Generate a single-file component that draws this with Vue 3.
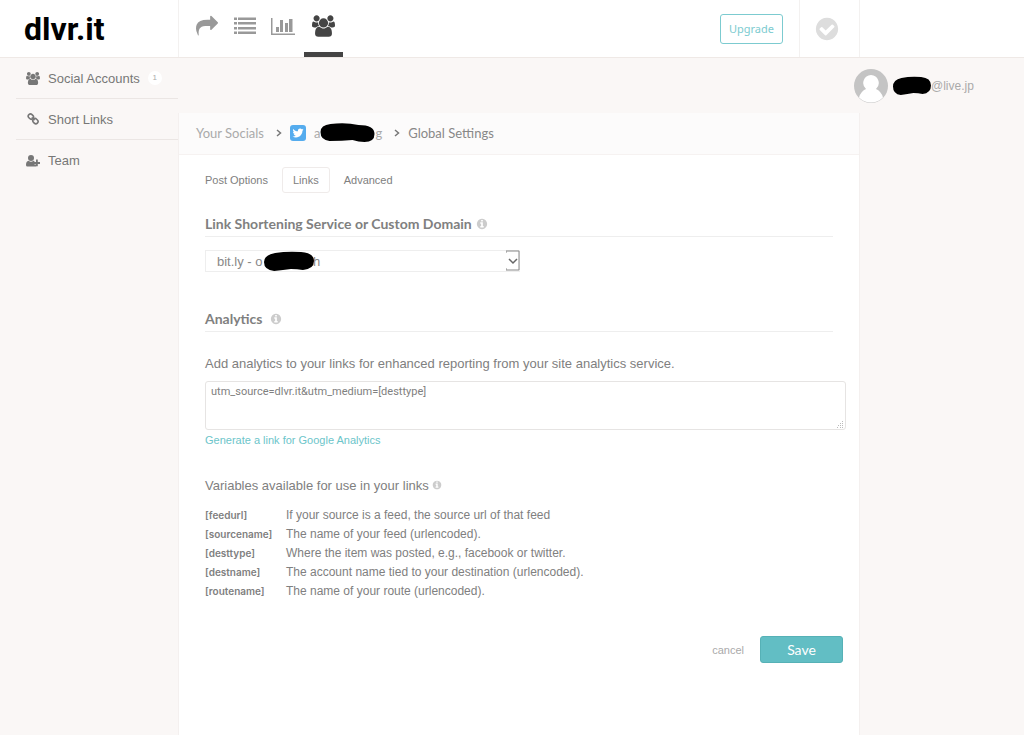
<template>
    <div class="page">
        <header class="topbar">
            <a href="#" class="logo">dlvr.it</a>

            <div class="topbar_main">
                <nav class="main_nav" aria-label="Main">
                    <a href="#" aria-label="Share">
                        <svg width="22" height="22" viewBox="0 0 1792 1792"><path :d="icons.share" /></svg>
                    </a>
                    <a href="#" aria-label="Queue">
                        <svg width="22" height="22" viewBox="0 0 22 22">
                            <path d="M0 2.500h3V5H0zM4 2.500h18V5H4zM0 7h3v2.500H0zM4 7h18v2.500H4zM0 12h3v2.500H0zM4 12h18v2.500H4zM0 16.500h3V19H0zM4 16.500h18V19H4z" />
                        </svg>
                    </a>
                    <a href="#" aria-label="Statistics">
                        <svg width="24" height="22" viewBox="0 0 24 22">
                            <path d="M0 3h1.500v15.500H24V20H0zM5 12h3v5H5zM9 5h3v12H9zM14 8h3v9h-3zM18 4h3.500v13H18z" />
                        </svg>
                    </a>
                    <a href="#" class="active" aria-label="Accounts">
                        <svg width="23" height="22" viewBox="0 0 1920 1792"><path :d="icons.users" /></svg>
                    </a>
                </nav>
                <button type="button" class="upgrade">Upgrade</button>
                <div class="status">
                    <svg width="26" height="26" viewBox="0 0 1792 1792"><path :d="icons.check" /></svg>
                </div>
            </div>
        </header>

        <div class="body">
            <aside class="sidebar">
                <a href="#">
                    <svg width="14" height="13" viewBox="0 0 1920 1792"><path :d="icons.users" /></svg>
                    <span>Social Accounts</span>
                    <span class="count">1</span>
                </a>
                <a href="#">
                    <svg width="14" height="14" viewBox="0 0 14 14">
                        <g fill="none" stroke="#777" stroke-width="1.6" transform="rotate(45 7 7)">
                            <rect x="1" y="4.6" width="5.500" height="4.4" rx="2.2" />
                            <rect x="7.5" y="4.6" width="5.500" height="4.4" rx="2.2" />
                            <path d="M5 6.8h4" />
                        </g>
                    </svg>
                    <span>Short Links</span>
                </a>
                <a href="#">
                    <svg width="14" height="14" viewBox="0 0 14 14">
                        <circle cx="5" cy="4" r="3" />
                        <path d="M2.6 6.7q2.4 1.900 4.8 0l1 .4v3.300h2v1.6q-.4.5-1.200.5H1.400Q0 12.500 0 11q0-3.800 2.600-4.300z" />
                        <path d="M10 5.500h1.800V8H14v1.900h-2.200v2.300H10V9.900H8V8h2z" />
                    </svg>
                    <span>Team</span>
                </a>
            </aside>

            <main>
                <div class="crumbs">
                    <a href="#">Your Socials</a>
                    <svg class="chevron" width="6" height="8" viewBox="0 0 6 8"><path d="M1 1l3.500 3L1 7" /></svg>
                    <svg class="twitter" width="16" height="16" viewBox="0 0 16 16">
                        <rect width="16" height="16" rx="3" fill="#55acee" />
                        <path transform="translate(2.500 2.500) scale(.46)" fill="#fff" :d="icons.twitter" />
                    </svg>
                    <a href="#" class="account">a<svg width="55" height="20" viewBox="0 0 54 20"><path :d="icons.blot" /></svg>g</a>
                    <svg class="chevron" width="6" height="8" viewBox="0 0 6 8"><path d="M1 1l3.500 3L1 7" /></svg>
                    <span class="current">Global Settings</span>
                </div>

                <form class="settings" @submit.prevent>
                    <div class="tabs">
                        <button
                            v-for="tab in tabs"
                            :key="tab"
                            type="button"
                            :class="{ selected: tab === currentTab }"
                            @click="currentTab = tab"
                        >{{ tab }}</button>
                    </div>

                    <h2>
                        <label for="service">Link Shortening Service or Custom Domain</label>
                        <svg class="info" width="12" height="12" viewBox="0 0 1792 1792"><path :d="icons.info" /></svg>
                    </h2>
                    <div class="select_box">
                        <select id="service" v-model="service">
                            <option value="bitly">bit.ly - o&nbsp;&nbsp;&nbsp;&nbsp;&nbsp;&nbsp;&nbsp;&nbsp;&nbsp;&nbsp;&nbsp;&nbsp;&nbsp;&nbsp;h</option>
                        </select>
                        <svg class="blot" width="50" height="20" viewBox="0 0 54 20" preserveAspectRatio="none"><path :d="icons.blot2" /></svg>
                        <svg class="arrow" width="14" height="21" viewBox="0 0 14 21">
                            <path d="M0 3V1h13v19H0v-2" stroke="#888" />
                            <path d="M3 9l4 4 4-4" stroke="#666" stroke-width="1.500" />
                        </svg>
                    </div>

                    <h2 class="analytics">
                        <span>Analytics</span>
                        <svg class="info" width="12" height="12" viewBox="0 0 1792 1792"><path :d="icons.info" /></svg>
                    </h2>
                    <label class="lead" for="analytics">Add analytics to your links for enhanced reporting from your site analytics service.</label>
                    <div class="text_box">
                        <textarea id="analytics" v-model="analytics" spellcheck="false"></textarea>
                        <svg class="grip" width="7" height="7" viewBox="0 0 7 7">
                            <path d="M5 0h1v1H5zM3 2h1v1H3zM5 2h1v1H5zM1 4h1v1H1zM3 4h1v1H3zM5 4h1v1H5zM0 6h1v1H0zM3 6h1v1H3zM5 6h1v1H5z" />
                        </svg>
                    </div>
                    <a href="#" class="generate">Generate a link for Google Analytics</a>

                    <p class="lead variables">
                        Variables available for use in your links
                        <svg class="info" width="10" height="10" viewBox="0 0 1792 1792"><path :d="icons.info" /></svg>
                    </p>
                    <table>
                        <tbody>
                            <tr v-for="item in variables" :key="item.name">
                                <th scope="row">[{{ item.name }}]</th>
                                <td>{{ item.text }}</td>
                            </tr>
                        </tbody>
                    </table>

                    <div class="actions">
                        <a href="#">cancel</a>
                        <button type="submit">Save</button>
                    </div>
                </form>
            </main>

            <div class="user">
                <svg width="34" height="34" viewBox="0 0 34 34">
                    <circle cx="17" cy="17" r="17" fill="#c4c4c4" />
                    <path fill="#fff" d="M17 6a8 8 0 0 1 5 14q5 2 7 8.500A17 17 0 0 1 5 28.500Q7 22 12 20a8 8 0 0 1 5-14z" />
                </svg>
                <svg class="name_blot" width="38" height="19" viewBox="0 0 54 20" preserveAspectRatio="none"><path :d="icons.blot2" /></svg>
                <span>@live.jp</span>
            </div>
        </div>
    </div>
</template>

<script setup>
import { ref } from 'vue';

const tabs = ['Post Options', 'Links', 'Advanced'];
const currentTab = ref('Links');
const service = ref('bitly');
const analytics = ref('utm_source=dlvr.it&utm_medium=[desttype]');

const variables = [
    { name: 'feedurl', text: 'If your source is a feed, the source url of that feed' },
    { name: 'sourcename', text: 'The name of your feed (urlencoded).' },
    { name: 'desttype', text: 'Where the item was posted, e.g., facebook or twitter.' },
    { name: 'destname', text: 'The account name tied to your destination (urlencoded).' },
    { name: 'routename', text: 'The name of your route (urlencoded).' },
];

const disc = 'q0 209-103 385.5t-279.5 279.5-385.5 103-385.5-103-279.5-279.5-103-385.5 103-385.5 279.5-279.5 385.5-103 385.5 103 279.5 279.5 103 385.5z';

const icons = {
    share: 'M1792 640q0 26-19 45l-512 512q-19 19-45 19t-45-19-19-45v-256h-224q-98 0-175.5 6t-154 21.5-133 42.5-105.5 69.5-80 101-48.5 138.5-17.5 181q0 55 5 123 0 6 2.5 23.5t2.5 26.5q0 15-8.5 25t-23.5 10q-16 0-28-17-7-9-13-22t-13.5-30-10.5-24q-127-285-127-451 0-199 53-333 162-403 875-403h224v-256q0-26 19-45t45-19 45 19l512 512q19 19 19 45z',
    users: 'M593 896q-162 5-265 128h-134q-82 0-138-40.5t-56-118.5q0-353 124-353 6 0 43.5 21t97.5 42.5 119 21.5q67 0 133-23-5 37-5 66 0 139 81 256zm1071 637q0 120-73 189.5t-194 69.5h-874q-121 0-194-69.5t-73-189.5q0-53 3.5-103.5t14-109 26.5-108.5 43-97.5 62-81 85.5-53.5 111.5-20q10 0 43 21.5t73 48 107 48 135 21.5 135-21.5 107-48 73-48 43-21.5q61 0 111.5 20t85.5 53.5 62 81 43 97.5 26.5 108.5 14 109 3.5 103.5zm-1024-1277q0 106-75 181t-181 75-181-75-75-181 75-181 181-75 181 75 75 181zm704 384q0 159-112.5 271.5t-271.5 112.5-271.5-112.5-112.5-271.5 112.5-271.5 271.5-112.5 271.5 112.5 112.5 271.5zm576 225q0 78-56 118.5t-138 40.5h-134q-103-123-265-128 81-117 81-256 0-29-5-66 66 23 133 23 59 0 119-21.5t97.5-42.5 43.5-21q124 0 124 353zm-128-609q0 106-75 181t-181 75-181-75-75-181 75-181 181-75 181 75 75 181z',
    check: 'M1412 734q0-28-18-46l-91-90q-19-19-45-19t-45 19l-408 407-226-226q-19-19-45-19t-45 19l-91 90q-18 18-18 46 0 27 18 45l362 362q19 19 45 19 27 0 46-19l543-543q18-18 18-45zm252 162' + disc,
    info: 'M1152 1376v-160q0-14-9-23t-23-9h-96v-512q0-14-9-23t-23-9h-320q-14 0-23 9t-9 23v160q0 14 9 23t23 9h96v320h-96q-14 0-23 9t-9 23v160q0 14 9 23t23 9h448q14 0 23-9t9-23zm-128-896v-160q0-14-9-23t-23-9h-192q-14 0-23 9t-9 23v160q0 14 9 23t23 9h192q14 0 23-9t9-23zm640 416' + disc,
    twitter: 'M23.953 4.57a10 10 0 01-2.825.775 4.958 4.958 0 002.163-2.723c-.951.555-2.005.959-3.127 1.184a4.92 4.92 0 00-8.384 4.482C7.69 8.095 4.067 6.13 1.64 3.162a4.822 4.822 0 00-.666 2.475c0 1.71.87 3.213 2.188 4.096a4.904 4.904 0 01-2.228-.616v.06a4.923 4.923 0 003.946 4.827 4.996 4.996 0 01-2.212.085 4.936 4.936 0 004.604 3.417 9.867 9.867 0 01-6.102 2.105c-.39 0-.779-.023-1.17-.067a13.995 13.995 0 007.557 2.209c9.053 0 13.998-7.496 13.998-13.985 0-.21 0-.42-.015-.63A9.935 9.935 0 0024 4.59z',
    blot: 'M10 1Q25-1 38 2q16 0 16 9 0 8-10 8-6 0-12-2-10 1-23 1-9-1-9-9 0-7 10-8z',
    blot2: 'M12 2Q25 0 40 1q14 1 14 9 0 8-12 9-6-1-13-1-8 1-18 2Q0 19 0 11q0-7 12-9z',
};
</script>

<style>
body{
    margin: 0;
    background: #faf7f6;
}
</style>

<style scoped>
*{
    box-sizing: border-box;
}

.page{
    min-height: 100vh;
    display: flex;
    flex-direction: column;
    background: #faf7f6;
    color: #808080;
    font-family: "Liberation Sans", Arial, sans-serif;
    font-size: 13px;
}

a{
    color: inherit;
    text-decoration: none;
}

svg{
    fill: currentColor;
    flex: none;
}

button{
    cursor: pointer;
    font-family: inherit;
}

/* Top bar */

.topbar{
    height: 58px;
    display: grid;
    grid-template-columns: 178px minmax(0, 1fr) 164px;
    background: #fff;
    border-bottom: 1px solid #efe9e6;
}

.logo{
    padding: 10px 0 0 24px;
    color: #000;
    font: bold 32px/38px Roboto, sans-serif;
}

.topbar_main{
    display: flex;
    align-items: center;
    border: solid #f3f1f0;
    border-width: 0 1px;
}

.main_nav{
    align-self: stretch;
    display: flex;
    flex: 1;
    padding-left: 9px;
    color: #999;
}

.main_nav a{
    width: 38px;
    display: flex;
    justify-content: center;
    padding-top: 15px;
}

.main_nav a.active{
    width: 39px;
    margin-left: 2px;
    color: #444;
    border-bottom: 5px solid #444;
}

.upgrade{
    height: 30px;
    padding: 0 8px;
    margin-right: 16px;
    border: 1px solid #7ccbd0;
    border-radius: 3px;
    background: #fff;
    color: #7ccbd0;
    font: 11px "Noto Sans", sans-serif;
}

.status{
    align-self: stretch;
    width: 60px;
    display: flex;
    align-items: center;
    justify-content: center;
    padding-right: 5px;
    border-left: 1px solid #f3f1f0;
    color: #ddd;
}

/* Columns */

.body{
    flex: 1;
    display: grid;
    grid-template-columns: 178px minmax(0, 1fr) 164px;
}

.sidebar{
    padding-left: 16px;
}

.sidebar a{
    height: 41px;
    display: flex;
    align-items: center;
    gap: 8px;
    padding-left: 10px;
    border-bottom: 1px solid #ebe6e4;
    color: #777;
}

.sidebar a:last-child{
    border-bottom: none;
}

.count{
    width: 14px;
    height: 14px;
    border-radius: 50%;
    background: #fff;
    color: #aaa;
    font-size: 8px;
    line-height: 14px;
    text-align: center;
}

main{
    margin-top: 55px;
    background: #fff;
    border: solid #f4f0ef;
    border-width: 0 1px;
}

.user{
    height: 55px;
    display: flex;
    align-items: center;
    margin-left: -6px;
    color: #aaa;
    font-size: 12px;
}

.name_blot{
    margin-left: 5px;
    color: #000;
}

/* Breadcrumb */

.crumbs{
    height: 42px;
    display: flex;
    align-items: center;
    padding: 0 0 2px 17px;
    background: #fcfbfb;
    border-bottom: 1px solid #f6f2f1;
    color: #aaa;
    font-family: Lato, sans-serif;
}

.chevron{
    margin: 0 8px 0 12px;
    fill: none;
    stroke: #777;
    stroke-width: 1.5;
}

.twitter{
    margin-right: 8px;
}

.account{
    display: flex;
    align-items: center;
}

.account svg{
    color: #000;
}

.crumbs .current{
    color: #888;
}

/* Settings */

.settings{
    padding: 12px 13px 30px 26px;
}

.tabs{
    display: flex;
    gap: 3px;
    margin-left: -11px;
}

.tabs button{
    height: 26px;
    padding: 0 10px;
    border: 1px solid transparent;
    border-radius: 3px;
    background: none;
    color: #808080;
    font-size: 11px;
}

.tabs .selected{
    border-color: #efebea;
}

h2{
    display: flex;
    align-items: center;
    gap: 4px;
    height: 26px;
    margin: 18px 13px 13px 0;
    border-bottom: 1px solid #eee;
    font: bold 14px Lato, sans-serif;
}

h2.analytics{
    margin-top: 34px;
    margin-bottom: 24px;
    gap: 8px;
}

.info{
    color: #ccc;
}

.select_box{
    position: relative;
    width: 315px;
}

select{
    width: 100%;
    height: 22px;
    padding: 0 20px 0 11px;
    border: 1px solid #eee;
    appearance: none;
    background: #fff;
    color: #888;
    font: 13px "Liberation Sans", sans-serif;
}

.blot{
    position: absolute;
    top: 1px;
    left: 59px;
    color: #000;
    pointer-events: none;
}

.arrow{
    position: absolute;
    top: 0;
    right: 0;
    fill: none;
    pointer-events: none;
}

.lead{
    display: block;
    line-height: 16px;
}

.text_box{
    position: relative;
    margin-top: 9px;
}

textarea{
    display: block;
    width: 100%;
    height: 49px;
    padding: 3px 5px;
    border: 1px solid #e6e4e3;
    border-radius: 3px;
    resize: none;
    background: #fff;
    color: #808080;
    font: 11px/14px Roboto, sans-serif;
}

.grip{
    position: absolute;
    right: 2px;
    bottom: 2px;
    color: #bbb;
}

.generate{
    display: block;
    margin-top: 3px;
    color: #6cc5ca;
    font-size: 11px;
    line-height: 14px;
}

.variables{
    margin: 31px 0 12px;
}

table{
    border-collapse: collapse;
    font-size: 12px;
    line-height: 19px;
}

th{
    width: 81px;
    padding: 0;
    text-align: left;
    font: 600 10px/19px Inter, sans-serif;
}

td{
    padding: 0;
}

.actions{
    display: flex;
    align-items: center;
    justify-content: flex-end;
    gap: 16px;
    margin: 35px 3px 0 0;
    color: #aaa;
    font-size: 11px;
}

.actions button{
    width: 83px;
    height: 27px;
    border: 1px solid #56b1b6;
    border-radius: 3px;
    background: #62bec4;
    color: #fff;
    font: 14px Lato, sans-serif;
}
</style>
